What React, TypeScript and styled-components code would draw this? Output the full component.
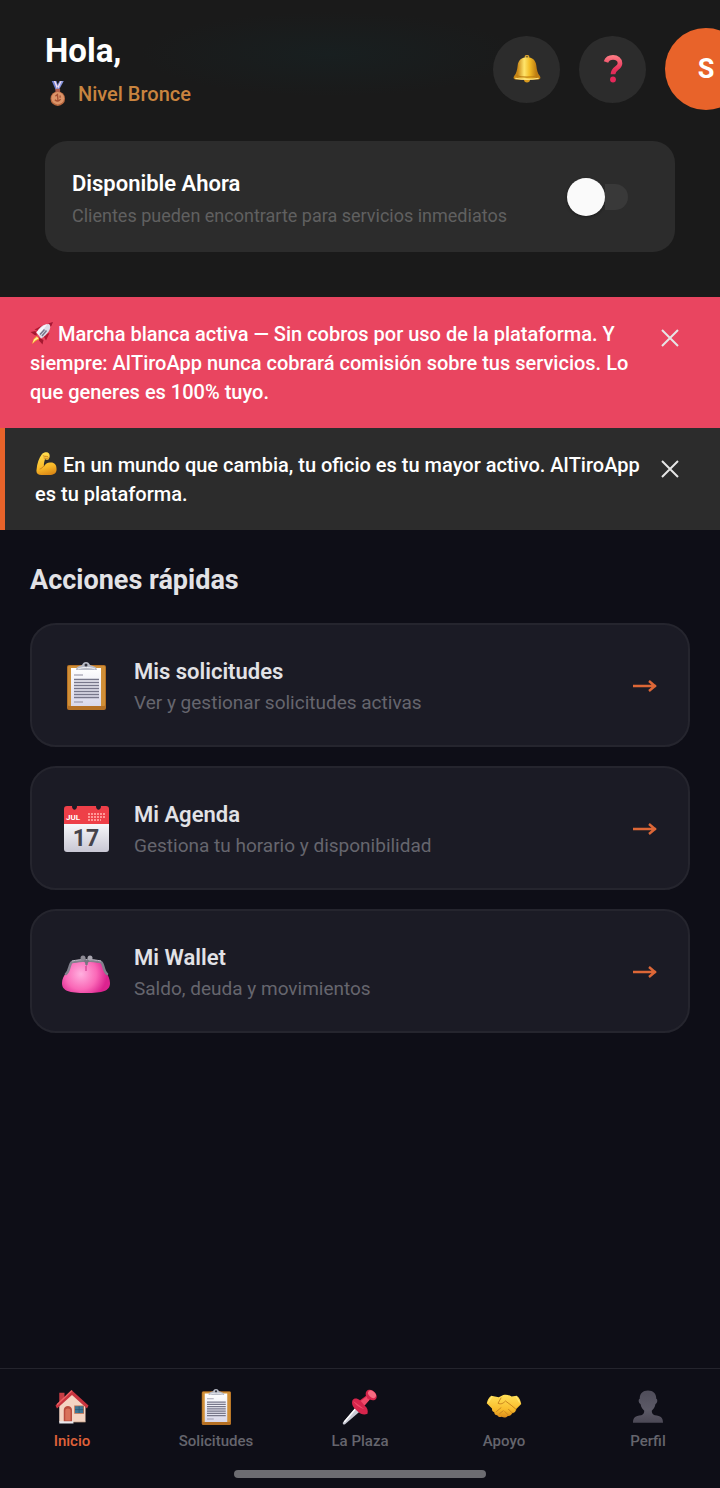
import { useState } from "react";
import type { ReactNode } from "react";
import styled, { createGlobalStyle } from "styled-components";

const GlobalStyle = createGlobalStyle`
  * {
    box-sizing: border-box;
  }

  body {
    margin: 0;
    background: #0e0e17;
    font-family: Roboto, "Liberation Sans", sans-serif;
  }

  h1, h2, h3, p {
    margin: 0;
  }

  button {
    border: none;
    padding: 0;
    font: inherit;
    cursor: pointer;
  }
`;

const Page = styled.div`
  display: flex;
  flex-direction: column;
  min-height: 100vh;
  overflow-x: hidden;
`;

const Header = styled.header`
  display: flex;
  flex-direction: column;
  gap: 31px;
  padding: 28px 45px 45px;
  background: radial-gradient(ellipse 190px 42px at 330px 54px, #181f20, #1a1a1a);
`;

const TopRow = styled.div`
  display: flex;
  justify-content: space-between;
  align-items: center;
  height: 82px;
  margin-right: -72px;
`;

const Greeting = styled.div`
  display: flex;
  flex-direction: column;
  gap: 11px;

  h1 {
    color: #fff;
    font-size: 33px;
    font-weight: 700;
    line-height: 38px;
  }
`;

const Level = styled.p`
  display: flex;
  align-items: center;
  gap: 8px;
  color: #c9843f;
  font-size: 20px;
  font-weight: 500;
  line-height: 26px;
`;

const HeaderActions = styled.div`
  display: flex;
  align-items: center;
  gap: 19px;
`;

const RoundButton = styled.button`
  display: flex;
  align-items: center;
  justify-content: center;
  width: 67px;
  height: 67px;
  border-radius: 50%;
  background: #2c2c2c;
`;

const Avatar = styled.button`
  width: 82px;
  height: 82px;
  border-radius: 50%;
  background: #e8632a;
  color: #fff;
  font-size: 27px;
  font-weight: 700;
`;

const AvailabilityCard = styled.label`
  display: flex;
  align-items: center;
  justify-content: space-between;
  padding: 24px 47px 24px 27px;
  border-radius: 22px;
  background: #2c2c2c;
  cursor: pointer;
`;

const AvailabilityText = styled.span`
  display: flex;
  flex-direction: column;

  strong {
    color: #fff;
    font-size: 22px;
    font-weight: 600;
    line-height: 38px;
  }

  span {
    color: #606060;
    font-size: 18px;
    line-height: 25px;
  }
`;

const Switch = styled.input`
  appearance: none;
  display: flex;
  align-items: center;
  flex-shrink: 0;
  width: 61px;
  height: 38px;
  margin: 0;
  cursor: pointer;

  &::before {
    content: "";
    width: 38px;
    height: 38px;
    border-radius: 50%;
    background: #fafafa;
    box-shadow: 0 1px 3px rgba(0, 0, 0, 0.4);
  }

  &::after {
    content: "";
    order: 1;
    flex: 1;
    height: 26px;
    border-radius: 0 13px 13px 0;
    background: #393939;
  }

  &:checked::before {
    order: 2;
    background: #e8632a;
  }

  &:checked::after {
    border-radius: 13px 0 0 13px;
  }
`;

const Banner = styled.section<{ $background: string; $accent?: string }>`
  display: flex;
  align-items: flex-start;
  justify-content: space-between;
  gap: 10px;
  padding: 23px 37px 21px 30px;
  background: ${(props) => props.$background};
  border-left: ${(props) => (props.$accent ? `5px solid ${props.$accent}` : "none")};

  p {
    flex: 1;
    color: #fff;
    font-size: 20px;
    font-weight: 500;
    line-height: 29px;
  }

  p svg {
    margin-right: 4px;
    vertical-align: -4px;
  }
`;

const CloseButton = styled.button`
  display: flex;
  align-items: center;
  justify-content: center;
  width: 26px;
  height: 36px;
  background: none;
  color: #e6e6e6;
`;

const QuickActions = styled.main`
  display: flex;
  flex-direction: column;
  padding: 34px 30px;

  h2 {
    margin-bottom: 27px;
    color: #e2e2e6;
    font-size: 27px;
    font-weight: 700;
    line-height: 32px;
  }
`;

const ActionList = styled.div`
  display: flex;
  flex-direction: column;
  gap: 19px;
`;

const ActionCard = styled.button`
  display: flex;
  align-items: center;
  gap: 24px;
  height: 124px;
  padding: 2px 30px 0;
  border: 2px solid #25252e;
  border-radius: 26px;
  background: #1b1b25;
  text-align: left;
`;

const ActionText = styled.span`
  display: flex;
  flex: 1;
  flex-direction: column;
  gap: 3px;
  padding-top: 3px;

  strong {
    color: #e2e2e6;
    font-size: 22px;
    font-weight: 600;
    line-height: 28px;
  }

  span {
    color: #66666e;
    font-size: 19px;
    line-height: 28px;
  }
`;

const BottomNav = styled.nav`
  margin-top: auto;
  padding: 20px 0 10px;
  border-top: 1px solid #24242d;
  background: #0e0e17;
`;

const Tabs = styled.div`
  display: flex;
`;

const Tab = styled.a<{ $active?: boolean }>`
  display: flex;
  flex: 1;
  flex-direction: column;
  align-items: center;
  gap: 6px;
  color: ${(props) => (props.$active ? "#e0623a" : "#65656d")};
  font-size: 15px;
  font-weight: 500;
  line-height: 20px;
  text-decoration: none;
`;

const HomeIndicator = styled.div`
  width: 35%;
  height: 8px;
  margin: 19px auto 0;
  border-radius: 4px;
  background: #6c6c71;
`;

type EmojiProps = { size: number };

const Emoji = ({ size, children }: EmojiProps & { children: ReactNode }) => (
  <svg width={size} height={size} viewBox="0 0 48 48" fill="none" aria-hidden="true">
    {children}
  </svg>
);

const Medal = ({ size }: EmojiProps) => (
  <Emoji size={size}>
    <path d="M13 0h9l5 15-5 5z" fill="#6f7fd0" />
    <path d="M36 0h-8l-8 15 5 5z" fill="#8795de" />
    <path d="M17 0h3l6 15-2 3zM32 0h-2l-8 15 2 3z" fill="#f3dce8" />
    <path d="M20 15h9v7h-9z" fill="#b15c4b" />
    <circle cx="24.500" cy="34" r="14" fill="#b8683f" />
    <circle cx="24.500" cy="33" r="12" fill="#dc9468" />
    <path d="M20 29l4-3 1 13M19 36c4 4 8 3 11-1M29 28v4" stroke="#a34f32" strokeWidth="2.500" />
  </Emoji>
);

const Bell = ({ size }: EmojiProps) => (
  <Emoji size={size}>
    <defs>
      <linearGradient id="bell" x1="8" y1="0" x2="40" y2="0" gradientUnits="userSpaceOnUse">
        <stop stopColor="#c98716" />
        <stop offset=".35" stopColor="#ffe56b" />
        <stop offset=".65" stopColor="#f2bb25" />
        <stop offset="1" stopColor="#bd7c12" />
      </linearGradient>
    </defs>
    <circle cx="24" cy="4" r="3" stroke="#d9a331" strokeWidth="2.500" />
    <ellipse cx="24" cy="43" rx="5" ry="4" fill="#d99b1f" />
    <path d="M24 4c9 0 15 5 16 14 1 8 2 14 6 18 2 3 1 5-2 6H4c-3-1-4-3-2-6 4-4 5-10 6-18C9 9 15 4 24 4z" fill="url(#bell)" />
    <path d="M5 35c10 4 28 4 38 0" stroke="#bf7f12" strokeWidth="2" />
    <path d="M4 40c12 2 28 2 40 0" stroke="#ffe27a" strokeWidth="2" />
  </Emoji>
);

const Question = ({ size }: EmojiProps) => (
  <Emoji size={size}>
    <defs>
      <linearGradient id="question" x1="24" y1="0" x2="24" y2="48" gradientUnits="userSpaceOnUse">
        <stop stopColor="#ff8086" />
        <stop offset=".5" stopColor="#e8335b" />
        <stop offset="1" stopColor="#cf1c55" />
      </linearGradient>
    </defs>
    <path d="M12 12c2-6 7-8 12-8 7 0 12 4 12 10 0 9-12 8-12 19" stroke="url(#question)" strokeWidth="8" />
    <circle cx="24" cy="42" r="5" fill="#e6285a" />
  </Emoji>
);

const Rocket = ({ size }: EmojiProps) => (
  <Emoji size={size}>
    <path d="M11 20L1 22l8 6 5 1zM27 38l-2 9-7-8v-6z" fill="#a51830" />
    <path d="M9 17l15-8-4 13zM32 39l7-15-13 4z" fill="#b41832" />
    <path d="M39 5l6-2-2 7z" fill="#b61c38" />
    <path d="M13 23C19 12 29 5 40 6c3 9-4 21-18 29z" fill="#dedde7" />
    <path d="M13 23c6-9 14-14 22-17L18 28z" fill="#f8f7fc" />
    <path d="M20 27l9-10M24 30l9-11" stroke="#77778c" strokeWidth="3" />
    <path d="M36 5c3 1 5 4 5 7l5-10z" fill="#a61835" />
    <path d="M13 30l6 6-6 3-9 7 3-10z" fill="#f7a626" />
    <path d="M14 32l3 3-7 4-5 6 3-8z" fill="#fff0a3" />
  </Emoji>
);

const Muscle = ({ size }: EmojiProps) => (
  <Emoji size={size}>
    <defs>
      <linearGradient id="muscle" x1="14" y1="4" x2="26" y2="48" gradientUnits="userSpaceOnUse">
        <stop stopColor="#ffdb4d" />
        <stop offset=".6" stopColor="#f9b928" />
        <stop offset="1" stopColor="#d88314" />
      </linearGradient>
    </defs>
    <path d="M14 4c4-4 11-5 14-1 2 3 2 8-1 12-2 1-5 1-7-1-1 5-3 10-2 15 3-6 8-9 14-8 7 0 11 5 11 12 1 9-5 13-15 13H13C6 46 2 43 3 36 4 23 8 12 14 4z" fill="url(#muscle)" />
    <path d="M18 28c-3 3-5 5-8 6M16 7c2 3 5 1 9 2M18 12c3 1 6 1 9 0" stroke="#cf861f" strokeWidth="2" strokeLinecap="round" />
  </Emoji>
);

const Clipboard = ({ size }: EmojiProps) => (
  <Emoji size={size}>
    <defs>
      <linearGradient id="paper" x1="24" y1="6" x2="24" y2="44" gradientUnits="userSpaceOnUse">
        <stop stopColor="#fff" />
        <stop offset="1" stopColor="#d9d8ea" />
      </linearGradient>
    </defs>
    <rect x="5" y="3" width="39" height="45" rx="2" fill="#b57024" />
    <rect x="6" y="4" width="37" height="40" rx="1" fill="#d08f37" />
    <rect x="9" y="6" width="30" height="38" fill="url(#paper)" />
    <path d="M12 13h9M12 40h9" stroke="#8e8c9e" />
    <path d="M12 17.500h25M12 20.500h25M12 23.500h25M12 26.500h25M12 29.500h25M12 32.500h25M12 35.500h25" stroke="#77778a" strokeWidth="1.400" />
    <path d="M14 8c0-3 3-4 6-5 1-2 2-3 4-3s3 1 4 3c3 1 7 2 7 5z" fill="#b8bbc7" />
    <path d="M16 7c4-2 13-2 17 0" stroke="#f0f1f6" />
    <circle cx="24" cy="3" r="1.500" fill="#33343e" />
  </Emoji>
);

const CalendarText = styled.text`
  font-family: Roboto, "Liberation Sans", sans-serif;
  font-weight: 700;
`;

const Calendar = ({ size }: EmojiProps) => (
  <Emoji size={size}>
    <defs>
      <linearGradient id="sheet" x1="24" y1="18" x2="24" y2="47" gradientUnits="userSpaceOnUse">
        <stop stopColor="#f8f8fb" />
        <stop offset="1" stopColor="#c8c7d4" />
      </linearGradient>
    </defs>
    <path d="M2 18h45v26c0 2-1 3-3 3H5c-2 0-3-1-3-3z" fill="url(#sheet)" />
    <path d="M2 19V4c0-2 1-3 3-3h5c0 5 5 5 5 0h19c0 5 5 5 5 0h5c2 0 3 1 3 3v15z" fill="#ee3f48" />
    <path d="M26 9h17M26 12h17M26 15h13" stroke="#ff9897" strokeWidth="2" strokeDasharray="2 1" />
    <CalendarText x="4" y="15" fontSize="8" fill="#fff">JUL</CalendarText>
    <CalendarText x="24" y="41" fontSize="23" textAnchor="middle" fill="#45434b">17</CalendarText>
  </Emoji>
);

const Purse = ({ size }: EmojiProps) => (
  <Emoji size={size}>
    <defs>
      <radialGradient id="purse" cx="19" cy="26" r="26" gradientUnits="userSpaceOnUse">
        <stop stopColor="#ffb0df" />
        <stop offset=".6" stopColor="#fa68b7" />
        <stop offset="1" stopColor="#dc238f" />
      </radialGradient>
    </defs>
    <path d="M9 15c10-2 22-2 31 0 1 7 8 12 8 20 0 8-7 10-24 10S0 43 0 35c0-8 8-13 9-20z" fill="url(#purse)" />
    <path d="M4 26c4-3 3-10 6-12 9-2 20-2 29 0 3 2 2 9 6 12" stroke="#83818d" strokeWidth="2.500" strokeLinecap="round" />
    <path d="M10 13c9-2 20-2 29 0" stroke="#c3bdc9" />
    <path d="M22 10l3 7M27 10l-3 7" stroke="#777680" strokeWidth="2" />
    <circle cx="21" cy="10" r="2.500" fill="#8d8a94" />
    <circle cx="28" cy="10" r="2.500" fill="#a9a6b0" />
    <path d="M24 18v5" stroke="#c62d82" />
  </Emoji>
);

const House = ({ size }: EmojiProps) => (
  <Emoji size={size}>
    <path d="M7 5h7v14H7z" fill="#c63d44" />
    <path d="M24 5L7 22v22h35V22z" fill="#f4d4c3" />
    <path d="M24 2L2 22l2 4 20-18 20 18 2-4z" fill="#c9343f" />
    <path d="M24 2L4 21" stroke="#ed6365" strokeWidth="2" />
    <path d="M13 44V28c0-7 11-7 11 0v16z" fill="#b94c3e" />
    <path d="M15 42V29c0-4 7-4 7 0v13z" fill="#d9725b" />
    <rect x="27" y="22" width="13" height="11" fill="#b96c4d" />
    <rect x="28" y="23" width="11" height="9" fill="#3d7594" />
    <path d="M33.500 23v9M28 27.500h11" stroke="#285772" />
    <path d="M7 43h19v3H7z" fill="#e9e8ee" />
    <path d="M26 44h16" stroke="#b9957d" />
  </Emoji>
);

const Pin = ({ size }: EmojiProps) => (
  <Emoji size={size}>
    <path d="M20 23L1 45c0 2 1 3 3 2l22-19z" fill="#c9cad5" />
    <path d="M20 24L3 44" stroke="#fff" strokeWidth="2" />
    <path d="M14 15c-2 5 1 10 7 15 4 4 9 5 13 3 1-4 0-8-4-11l7-8c4 2 8 1 9-2 2-5-5-12-10-11-4 1-5 4-4 8l-8 6c-4-3-8-3-10 0z" fill="#d7254c" />
    <path d="M15 16c2 4 8 9 15 11M25 16l8-6c0 3 2 4 4 4l-7 8" fill="#f04a69" />
    <ellipse cx="40" cy="7" rx="6" ry="4" transform="rotate(42 40 7)" fill="#f76a81" />
  </Emoji>
);

const Handshake = ({ size }: EmojiProps) => (
  <Emoji size={size}>
    <defs>
      <linearGradient id="hands" x1="24" y1="9" x2="24" y2="39" gradientUnits="userSpaceOnUse">
        <stop stopColor="#ffdd55" />
        <stop offset=".6" stopColor="#f9bd2c" />
        <stop offset="1" stopColor="#d98718" />
      </linearGradient>
    </defs>
    <path d="M7 9l10 2 6-3c4-1 8 0 11 2l7-1c4 3 5 7 6 11l-7 7c0 3-2 5-5 5-1 3-3 4-6 4-2 2-5 3-8 1-3 1-5 0-6-2-3 0-4-2-4-4-3-1-3-3-3-5l-7-7c1-4 2-7 6-10z" fill="url(#hands)" />
    <path d="M20 12l-4 7c4 2 7 0 10-3 5 4 10 7 14 11M30 27l5 5M25 30l5 5M14 30l6-5M18 33l5-4" stroke="#c9851f" strokeWidth="1.300" strokeLinecap="round" />
    <path d="M8 10l-5 8M40 10l5 8" stroke="#ffe875" strokeWidth="1.500" />
  </Emoji>
);

const Person = ({ size }: EmojiProps) => (
  <Emoji size={size}>
    <defs>
      <linearGradient id="person" x1="24" y1="2" x2="24" y2="45" gradientUnits="userSpaceOnUse">
        <stop stopColor="#4f4d5a" />
        <stop offset=".6" stopColor="#5c5a67" />
        <stop offset="1" stopColor="#4b4855" />
      </linearGradient>
    </defs>
    <path d="M24 2c7 0 11 4 11 11 2 0 2 6-1 7-1 5-3 7-5 9 0 3 1 5 4 6 8 1 11 3 11 10H4c0-7 3-9 11-10 3-1 4-3 4-6-2-2-4-4-5-9-3-1-3-7-1-7 0-7 4-11 11-11z" fill="url(#person)" />
  </Emoji>
);

const CloseIcon = () => (
  <svg width="18" height="18" viewBox="0 0 18 18" stroke="currentColor" strokeWidth="2" aria-hidden="true">
    <path d="M1 1l16 16M17 1L1 17" />
  </svg>
);

const ArrowIcon = () => (
  <svg width="26" height="14" viewBox="0 0 26 14" fill="none" stroke="#dd6737" strokeWidth="2.400" aria-hidden="true">
    <path d="M1 7h23M17 2l6 5-6 5" />
  </svg>
);

const actions = [
  { title: "Mis solicitudes", text: "Ver y gestionar solicitudes activas", Icon: Clipboard },
  { title: "Mi Agenda", text: "Gestiona tu horario y disponibilidad", Icon: Calendar },
  { title: "Mi Wallet", text: "Saldo, deuda y movimientos", Icon: Purse },
];

const tabs = [
  { label: "Inicio", href: "#inicio", Icon: House },
  { label: "Solicitudes", href: "#solicitudes", Icon: Clipboard },
  { label: "La Plaza", href: "#plaza", Icon: Pin },
  { label: "Apoyo", href: "#apoyo", Icon: Handshake },
  { label: "Perfil", href: "#perfil", Icon: Person },
];

const App = () => {
  const [available, setAvailable] = useState(false);
  const [showLaunch, setShowLaunch] = useState(true);
  const [showMessage, setShowMessage] = useState(true);

  return (
    <Page>
      <GlobalStyle />
      <Header>
        <TopRow>
          <Greeting>
            <h1>Hola,</h1>
            <Level>
              <Medal size={25} />
              Nivel Bronce
            </Level>
          </Greeting>
          <HeaderActions>
            <RoundButton aria-label="Notificaciones">
              <Bell size={28} />
            </RoundButton>
            <RoundButton aria-label="Ayuda">
              <Question size={28} />
            </RoundButton>
            <Avatar>S</Avatar>
          </HeaderActions>
        </TopRow>
        <AvailabilityCard htmlFor="available">
          <AvailabilityText>
            <strong>Disponible Ahora</strong>
            <span>Clientes pueden encontrarte para servicios inmediatos</span>
          </AvailabilityText>
          <Switch
            id="available"
            type="checkbox"
            role="switch"
            checked={available}
            onChange={(e) => setAvailable(e.target.checked)}
          />
        </AvailabilityCard>
      </Header>

      {showLaunch && (
        <Banner $background="#e94560">
          <p>
            <Rocket size={24} />
            Marcha blanca activa — Sin cobros por uso de la plataforma. Y siempre: AlTiroApp nunca cobrará comisión sobre tus servicios. Lo que generes es 100% tuyo.
          </p>
          <CloseButton aria-label="Cerrar" onClick={() => setShowLaunch(false)}>
            <CloseIcon />
          </CloseButton>
        </Banner>
      )}
      {showMessage && (
        <Banner $background="#2c2c2c" $accent="#e8632a">
          <p>
            <Muscle size={24} />
            En un mundo que cambia, tu oficio es tu mayor activo. AlTiroApp es tu plataforma.
          </p>
          <CloseButton aria-label="Cerrar" onClick={() => setShowMessage(false)}>
            <CloseIcon />
          </CloseButton>
        </Banner>
      )}

      <QuickActions>
        <h2>Acciones rápidas</h2>
        <ActionList>
          {actions.map(({ title, text, Icon }) => (
            <ActionCard key={title}>
              <Icon size={48} />
              <ActionText>
                <strong>{title}</strong>
                <span>{text}</span>
              </ActionText>
              <ArrowIcon />
            </ActionCard>
          ))}
        </ActionList>
      </QuickActions>

      <BottomNav>
        <Tabs>
          {tabs.map(({ label, href, Icon }, index) => (
            <Tab key={label} href={href} $active={index === 0}>
              <Icon size={36} />
              {label}
            </Tab>
          ))}
        </Tabs>
        <HomeIndicator />
      </BottomNav>
    </Page>
  );
};

export default App;
